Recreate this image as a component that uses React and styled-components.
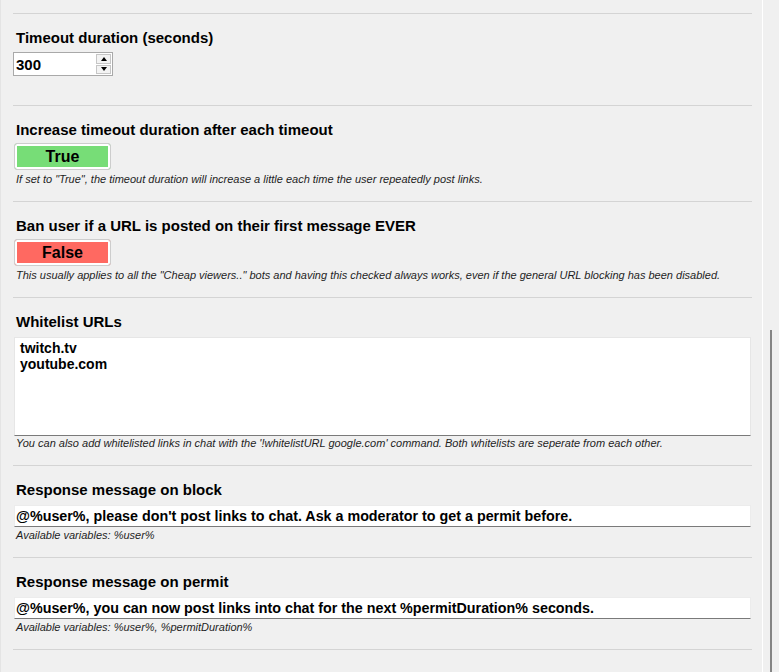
import React from "react";
import styled, { createGlobalStyle } from "styled-components";

const GlobalStyle = createGlobalStyle`
  html, body {
    margin: 0;
    padding: 0;
    background: #f0f0f0;
    overflow: hidden;
  }
  body {
    font-family: "Liberation Sans", Arial, sans-serif;
    color: #000;
  }
  * { box-sizing: border-box; }
`;

const Window = styled.div`
  display: flex;
  height: 672px;
  width: 779px;
  overflow: hidden;
`;

const Content = styled.div`
  width: 762px;
  flex: none;
  border-left: 1px solid #e4e4e4;
  padding: 13px 10px 0 12px;
  overflow: hidden;
`;

const Rail = styled.div`
  flex: 1;
  display: flex;
  border-left: 1px solid #ffffff;
  background: #f0f0f0;
`;

const Thumb = styled.div`
  width: 2px;
  margin-left: 7px;
  margin-top: 330px;
  background: #858585;
`;

const Section = styled.section`
  border-top: 1px solid #d4d4d4;
  padding: 15px 0;
`;

const Divider = styled.div`
  border-top: 1px solid #d4d4d4;
`;

const Label = styled.div`
  font-weight: bold;
  font-size: 15px;
  line-height: 18px;
  padding-left: 3px;
  white-space: nowrap;
`;

const Hint = styled.div`
  font-style: italic;
  font-size: 11px;
  line-height: 13px;
  color: #1e1e1e;
  padding-left: 3px;
  margin-top: ${(p) => p.$gap ?? 2}px;
  white-space: nowrap;
`;

const NumberBox = styled.div`
  display: flex;
  width: 100px;
  height: 24px;
  margin-top: 5px;
  margin-bottom: 14px;
  border: 1px solid #a9a9a9;
  background: #fff;
`;

const NumberInput = styled.input`
  flex: 1;
  min-width: 0;
  border: none;
  outline: none;
  background: transparent;
  padding: 0 0 0 2px;
  font-family: "Liberation Sans", Arial, sans-serif;
  font-weight: bold;
  font-size: 15px;
  color: #000;
`;

const Spinner = styled.div`
  display: flex;
  flex-direction: column;
  width: 15px;
  margin: 1px 1px 1px 0;
  gap: 1px;
`;

const SpinButton = styled.div`
  flex: 1;
  display: flex;
  align-items: center;
  justify-content: center;
  border: 1px solid #c6c6c6;
  background: #f3f3f3;
`;

const Arrow = styled.span`
  width: 0;
  height: 0;
  border-left: 3.5px solid transparent;
  border-right: 3.5px solid transparent;
  ${(p) =>
    p.$up
      ? "border-bottom: 4px solid #000;"
      : "border-top: 4px solid #000;"}
`;

const Toggle = styled.button`
  display: flex;
  align-items: center;
  justify-content: center;
  width: 97px;
  height: 27px;
  margin: 4px 0 0 1px;
  padding: 0;
  border: 1px solid #cdcdcd;
  border-radius: 3px;
  background: ${(p) => (p.$on ? "#77dd77" : "#ff6961")};
  box-shadow: inset 0 0 0 2px #ffffff;
  font-family: "Liberation Sans", Arial, sans-serif;
  font-weight: bold;
  font-size: 16px;
  color: #000;
  cursor: pointer;
`;

const TextArea = styled.textarea`
  display: block;
  width: calc(100% - 2px);
  height: 99px;
  margin: 6px 1px 0;
  padding: 2px 5px;
  border: 1px solid #e6e6e6;
  border-bottom: 1px solid #7a7a7a;
  background: #fff;
  resize: none;
  outline: none;
  font-family: "Liberation Sans", Arial, sans-serif;
  font-weight: bold;
  font-size: 14px;
  line-height: 16px;
  color: #000;
  overflow: hidden;
`;

const TextInput = styled.input`
  display: block;
  width: calc(100% - 2px);
  height: 22px;
  margin: 6px 1px 0;
  padding: 0 1px;
  border: 1px solid #ececec;
  border-bottom: 1px solid #7a7a7a;
  background: #fff;
  outline: none;
  font-family: "Liberation Sans", Arial, sans-serif;
  font-weight: bold;
  font-size: 14.3px;
  color: #000;
`;

export default function App() {
  return (
    <>
      <GlobalStyle />
      <Window>
        <Content>
          <Section>
            <Label>Timeout duration (seconds)</Label>
            <NumberBox>
              <NumberInput defaultValue="300" />
              <Spinner>
                <SpinButton>
                  <Arrow $up />
                </SpinButton>
                <SpinButton>
                  <Arrow />
                </SpinButton>
              </Spinner>
            </NumberBox>
          </Section>

          <Section>
            <Label>Increase timeout duration after each timeout</Label>
            <Toggle $on>True</Toggle>
            <Hint $gap={3}>
              If set to "True", the timeout duration will increase a little each time the user repeatedly post links.
            </Hint>
          </Section>

          <Section>
            <Label>Ban user if a URL is posted on their first message EVER</Label>
            <Toggle>False</Toggle>
            <Hint $gap={3}>
              This usually applies to all the "Cheap viewers.." bots and having this checked always works, even if the general URL blocking has been disabled.
            </Hint>
          </Section>

          <Section>
            <Label>Whitelist URLs</Label>
            <TextArea defaultValue={"twitch.tv\nyoutube.com"} />
            <Hint $gap={1}>
              You can also add whitelisted links in chat with the '!whitelistURL google.com' command. Both whitelists are seperate from each other.
            </Hint>
          </Section>

          <Section>
            <Label>Response message on block</Label>
            <TextInput defaultValue="@%user%, please don't post links to chat. Ask a moderator to get a permit before." />
            <Hint>Available variables: %user%</Hint>
          </Section>

          <Section>
            <Label>Response message on permit</Label>
            <TextInput defaultValue="@%user%, you can now post links into chat for the next %permitDuration% seconds." />
            <Hint>Available variables: %user%, %permitDuration%</Hint>
          </Section>
          <Divider />
        </Content>
        <Rail>
          <Thumb />
        </Rail>
      </Window>
    </>
  );
}
